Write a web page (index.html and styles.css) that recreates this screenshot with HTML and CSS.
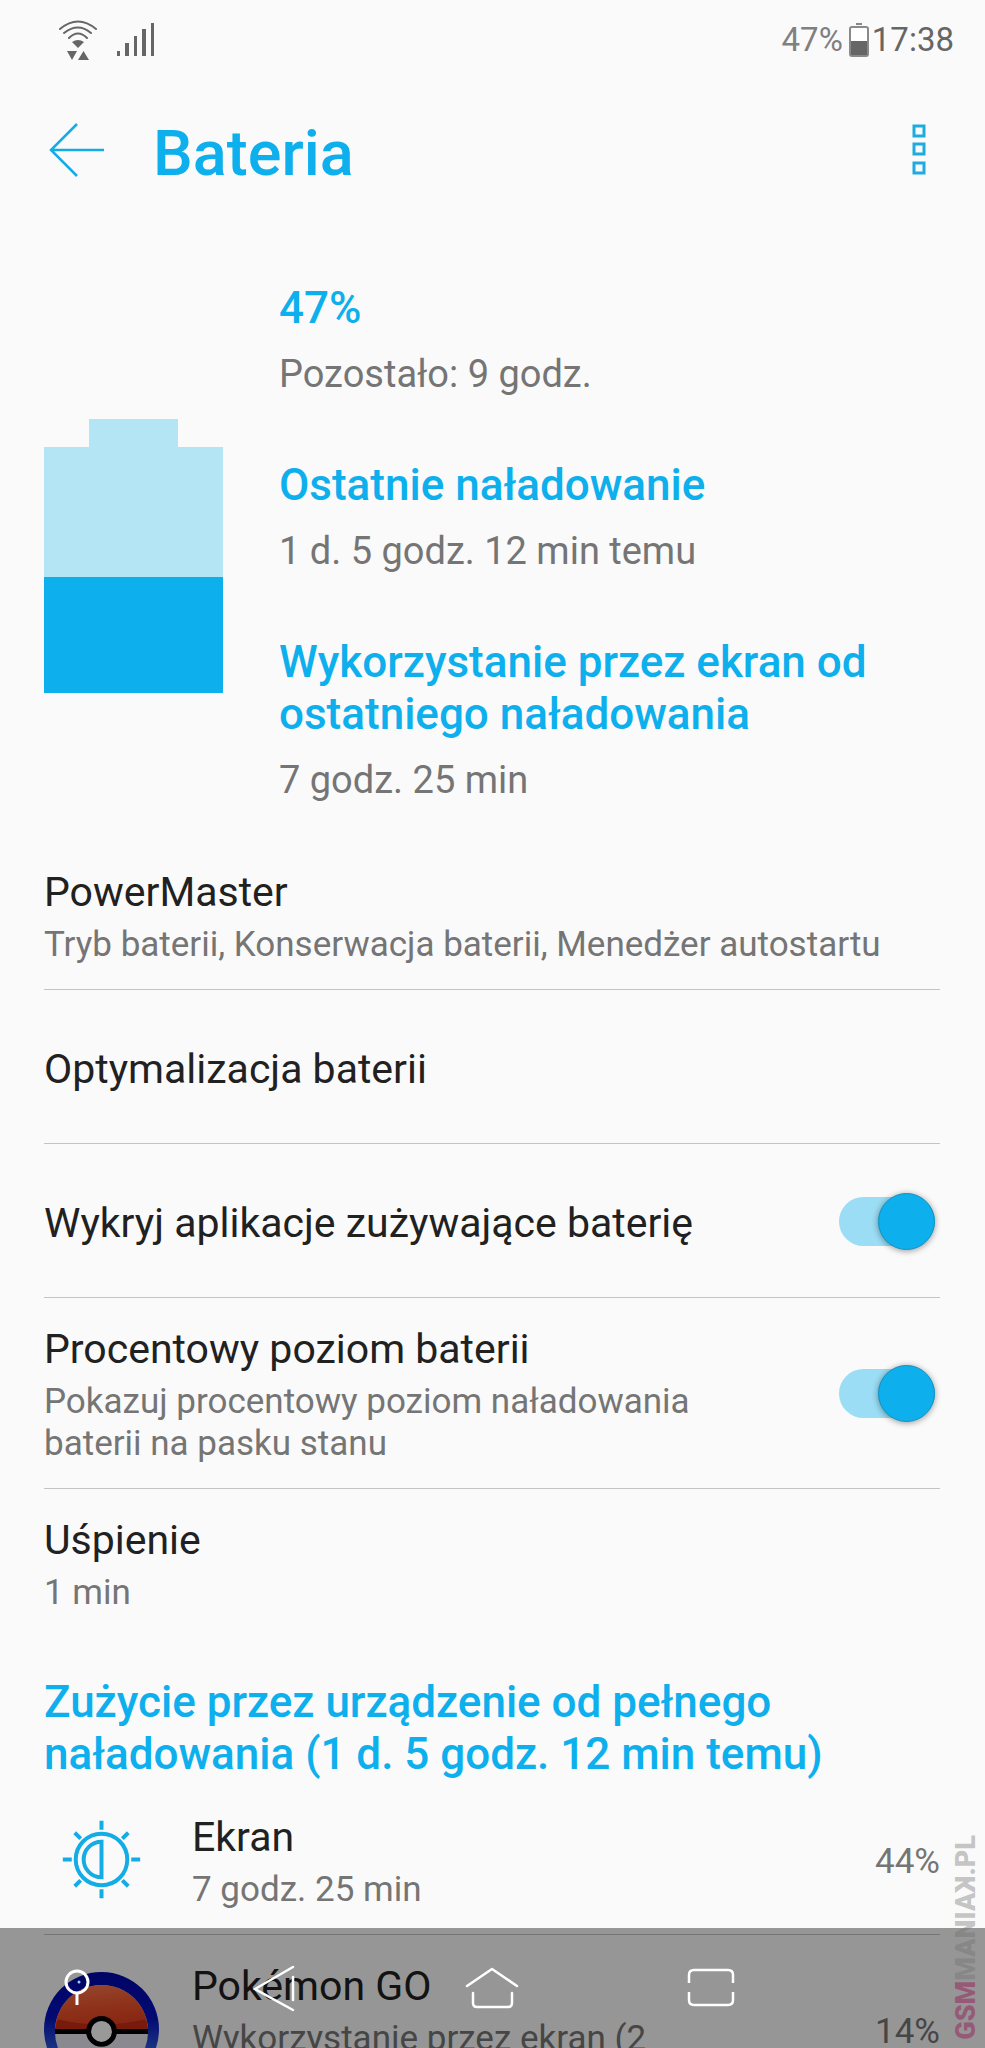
FILE: index.html
```html
<!DOCTYPE html>
<html lang="pl">
<head>
  <meta charset="UTF-8" />
  <meta name="viewport" content="width=device-width, initial-scale=1" />
  <title>Bateria</title>
  <link rel="stylesheet" href="styles.css">
</head>

<body>
<div class="screen">

  <!-- Status bar -->
  <div class="status-bar">
    <svg class="wifi" width="40" height="40" viewBox="0 0 40 40" fill="none" stroke="#666" stroke-width="2" stroke-linecap="round">
      <path d="M2 9Q20 -6 38 9M6 13Q20 2 33 13M11 18Q20 9 29 18" />
      <path d="M14 22Q20 18 26 22L20 28Z" fill="#666" stroke="none" />
      <path d="M9 31H19L14 40ZM20 40H31L25.500 31Z" fill="#666" stroke="none" />
    </svg>
    <svg class="signal" width="38" height="34" viewBox="0 0 38 34" fill="#666">
      <rect x="0" y="28" width="3" height="5" />
      <rect x="8" y="20" width="4" height="13" />
      <rect x="17" y="13" width="3" height="20" />
      <rect x="25" y="6" width="4" height="27" />
      <rect x="34" y="0" width="3" height="33" />
    </svg>
    <span class="status-percent">47%</span>
    <svg class="status-battery" width="20" height="36" viewBox="0 0 20 36">
      <rect x="7" y="1" width="6" height="2" fill="#888" />
      <rect x="1" y="5" width="18" height="29" rx="2" fill="#fff" stroke="#8a8a8a" stroke-width="2" />
      <rect x="2" y="19" width="16" height="14" fill="#666" />
    </svg>
    <span class="clock">17:38</span>
  </div>

  <header class="app-bar">
    <button class="icon-btn" aria-label="Wstecz">
      <svg width="56" height="56" viewBox="0 0 56 56" fill="none" stroke="#14ace4" stroke-width="2.500">
        <path d="M29 2L3 28L29 54M3 28H56" />
      </svg>
    </button>
    <h1>Bateria</h1>
    <button class="icon-btn" aria-label="Więcej opcji">
      <svg width="14" height="52" viewBox="0 0 14 52" fill="none" stroke="#1eabe0" stroke-width="3">
        <rect x="2" y="2" width="10" height="10" />
        <rect x="2" y="20" width="10" height="10" />
        <rect x="2" y="39" width="10" height="10" />
      </svg>
    </button>
  </header>

  <main>
    <section class="summary">
      <div class="battery">
        <div class="battery-cap"></div>
        <div class="battery-body">
          <div class="battery-level" style="height: 47%"></div>
        </div>
      </div>
      <dl class="stats">
        <dt>47%</dt>
        <dd>Pozostało: 9 godz.</dd>
        <dt>Ostatnie naładowanie</dt>
        <dd>1 d. 5 godz. 12 min temu</dd>
        <dt>Wykorzystanie przez ekran od ostatniego naładowania</dt>
        <dd>7 godz. 25 min</dd>
      </dl>
    </section>

    <!-- Settings -->
    <a href="#" class="row">
      <span class="row-text">
        <span class="row-title">PowerMaster</span>
        <span class="row-sub">Tryb baterii, Konserwacja baterii, Menedżer autostartu</span>
      </span>
    </a>
    <a href="#" class="row single">
      <span class="row-title">Optymalizacja baterii</span>
    </a>
    <label class="row single">
      <span class="row-text">
        <span class="row-title">Wykryj aplikacje zużywające baterię</span>
      </span>
      <input type="checkbox" class="switch" checked>
    </label>
    <label class="row">
      <span class="row-text">
        <span class="row-title">Procentowy poziom baterii</span>
        <span class="row-sub">Pokazuj procentowy poziom naładowania baterii na pasku stanu</span>
      </span>
      <input type="checkbox" class="switch" checked>
    </label>
    <a href="#" class="row last">
      <span class="row-text">
        <span class="row-title">Uśpienie</span>
        <span class="row-sub">1 min</span>
      </span>
    </a>

    <!-- Usage list -->
    <h2>Zużycie przez urządzenie od pełnego naładowania (1 d. 5 godz. 12 min temu)</h2>
    <a href="#" class="row usage">
      <svg class="app-icon" viewBox="0 0 116 116" fill="none" stroke="#14ace4" stroke-width="4">
        <circle cx="58" cy="58" r="26" />
        <path d="M58 40A18 18 0 0 0 58 76Z" />
        <path d="M58 19V28M58 88V97M19 58H28M88 58H97M31 31L37 37M79 79L85 85M85 31L79 37M37 79L31 85" />
      </svg>
      <span class="row-text">
        <span class="row-title">Ekran</span>
        <span class="row-sub">7 godz. 25 min</span>
      </span>
      <span class="row-value">44%</span>
    </a>
    <a href="#" class="row usage">
      <svg class="app-icon" viewBox="0 0 116 116">
        <defs>
          <linearGradient id="redTop" x1="0" y1="0" x2="0.200" y2="1">
            <stop offset="0" stop-color="#f87850" />
            <stop offset="0.500" stop-color="#f0562e" />
            <stop offset="1" stop-color="#e03c1c" />
          </linearGradient>
          <linearGradient id="rim" x1="0" y1="0" x2="0" y2="1">
            <stop offset="0" stop-color="#0008a8" />
            <stop offset="0.400" stop-color="#0512c0" />
            <stop offset="0.800" stop-color="#4078e0" />
          </linearGradient>
        </defs>
        <circle cx="58" cy="58" r="58" fill="url(#rim)" />
        <circle cx="58" cy="60" r="47" fill="#e4e4ee" />
        <path d="M11 60A47 47 0 0 1 105 60Z" fill="url(#redTop)" />
        <path d="M11 60Q12 52 14 48Q58 58 102 48Q104 52 105 60Z" fill="#c82c14" />
        <path d="M11 60H105" stroke="#000" stroke-width="5" />
        <circle cx="58" cy="60" r="13" fill="#fff" stroke="#000" stroke-width="5" />
      </svg>
      <span class="row-text">
        <span class="row-title">Pokémon GO</span>
        <span class="row-sub">Wykorzystanie przez ekran (2 godz. 5 min)</span>
      </span>
      <span class="row-value">14%</span>
    </a>
  </main>

  <!-- Navigation bar -->
  <nav class="nav-bar">
    <button class="nav-pin" aria-label="Przypnij">
      <svg width="26" height="44" viewBox="0 0 26 44" fill="none" stroke="#fff" stroke-width="3">
        <circle cx="13" cy="16" r="11" />
        <path d="M13 27V39" />
        <circle cx="15" cy="16" r="1.500" fill="#9cf" stroke="none" />
      </svg>
    </button>
    <button aria-label="Wstecz">
      <svg width="44" height="48" viewBox="0 0 44 48" fill="none" stroke="#fff" stroke-width="2.500" stroke-linecap="round">
        <path d="M41 3L3 25L41 46M41 13V36" />
      </svg>
    </button>
    <button aria-label="Ekran główny">
      <svg width="54" height="44" viewBox="0 0 54 44" fill="none" stroke="#fff" stroke-width="2.500" stroke-linecap="round" stroke-linejoin="round">
        <path d="M2 20L27 3L52 20M8 27V37Q8 41 12 41H43Q47 41 47 37V27" />
      </svg>
    </button>
    <button aria-label="Ostatnie aplikacje">
      <svg width="48" height="40" viewBox="0 0 48 40" fill="none" stroke="#fff" stroke-width="2.500">
        <path d="M2 15V7Q2 2 7 2H41Q46 2 46 7V15M2 24V32Q2 37 7 37H41Q46 37 46 32V24" />
      </svg>
    </button>
  </nav>

  <div class="watermark"><b>GSM</b>MANIA<span class="flip">K</span>.PL</div>

</div>
</body>
</html>
```
FILE: styles.css
```css
* {
  box-sizing: border-box;
}

body {
  margin: 0;
  background-color: #fafafa;
  color: #212121;
  font-family: Roboto, 'Liberation Sans', sans-serif;
}

button {
  background: none;
  border: none;
  padding: 0;
  cursor: pointer;
}

svg {
  display: block;
}

.screen {
  position: relative;
  display: flex;
  flex-direction: column;
  height: 100vh;
  overflow: hidden;
}

/* --- STATUS BAR --- */
.status-bar {
  display: flex;
  flex: none;
  align-items: center;
  height: 80px;
  padding: 0 31px 0 58px;
  color: #666;
  font-size: 33px;
  line-height: 40px;
}

.signal {
  margin-left: 19px;
}

.status-percent {
  margin-left: auto;
  color: #808080;
}

.status-battery {
  margin: 0 3px 0 6px;
}

/* --- APP BAR --- */
.app-bar {
  display: flex;
  flex: none;
  align-items: center;
  height: 140px;
  padding: 0 59px 0 48px;
}

h1 {
  flex: 1;
  margin: 8px 0 0 49px;
  color: #0dafed;
  font-size: 63px;
  font-weight: 500;
  line-height: 72px;
}

/* --- CONTENT --- */
main {
  flex: 1;
  min-height: 0;
  padding: 62px 45px 0 44px;
  overflow-y: auto;
  scrollbar-width: none;
}

.summary {
  display: grid;
  grid-template-columns: 179px 1fr;
  column-gap: 56px;
  align-items: center;
  margin-bottom: 38px;
}

.battery {
  margin-top: 26px;
}

.battery-cap {
  width: 50%;
  height: 28px;
  margin: 0 auto;
  background: #b3e5f5;
}

.battery-body {
  display: flex;
  align-items: flex-end;
  height: 246px;
  background: #b3e5f5;
}

.battery-level {
  width: 100%;
  background: #0dafed;
}

.stats {
  margin: 0;
}

.stats dt,
h2 {
  color: #0dafed;
  font-size: 44px;
  font-weight: 500;
  line-height: 52px;
}

.stats dd {
  margin: 17px 0 62px;
  color: #757575;
  font-size: 38px;
  line-height: 46px;
}

.stats dd:last-child {
  margin-bottom: 0;
}

.row {
  display: flex;
  align-items: center;
  padding: 27px 0 23px;
  border-bottom: 1px solid #c4c4c4;
  color: inherit;
  text-decoration: none;
}

.row.single {
  padding: 55px 0 50px;
}

.row.last {
  border-bottom: none;
}

.row-text {
  flex: 1;
}

.row-title,
.row-sub {
  display: block;
}

.row-title {
  font-size: 41px;
  line-height: 48px;
}

.row-sub {
  margin-top: 8px;
  color: #757575;
  font-size: 35px;
  line-height: 42px;
}

.row-value {
  color: #757575;
  font-size: 35px;
  line-height: 42px;
}

.switch {
  appearance: none;
  flex: none;
  display: flex;
  align-items: center;
  justify-content: flex-end;
  width: 96px;
  height: 49px;
  margin: -4px 5px 0 100px;
  border-radius: 25px;
  background: #9bddf4;
  cursor: pointer;
}

.switch::before {
  content: "";
  flex: none;
  width: 55px;
  height: 55px;
  border: 1px solid #1092c4;
  border-radius: 50%;
  background: #0dafed;
  box-shadow: 0 1px 6px rgba(0, 0, 0, 0.4);
}

.switch:not(:checked) {
  justify-content: flex-start;
  background: #ccc;
}

h2 {
  margin: 39px 0 6px;
}

.app-icon {
  flex: none;
  width: 115px;
  height: 115px;
  margin: -12px 33px -6px 0;
}

.usage .row-value {
  margin-left: 150px;
}

/* --- NAVIGATION BAR --- */
.nav-bar {
  position: absolute;
  right: 0;
  bottom: 0;
  left: 0;
  display: grid;
  grid-template-columns: 3fr 4fr 4fr 4fr 3fr;
  align-items: center;
  justify-items: center;
  height: 120px;
  background: rgba(0, 0, 0, 0.4);
}

.nav-pin {
  justify-self: start;
  margin-left: 64px;
}

.watermark {
  position: absolute;
  right: 2px;
  bottom: 8px;
  color: rgba(110, 110, 110, 0.4);
  font-size: 27px;
  font-weight: 900;
  line-height: 34px;
  writing-mode: vertical-rl;
  transform: rotate(180deg);
}

.watermark b {
  color: rgba(150, 30, 90, 0.5);
  font-weight: 900;
}

.flip {
  display: inline-block;
  transform: scaleY(-1);
}
```
